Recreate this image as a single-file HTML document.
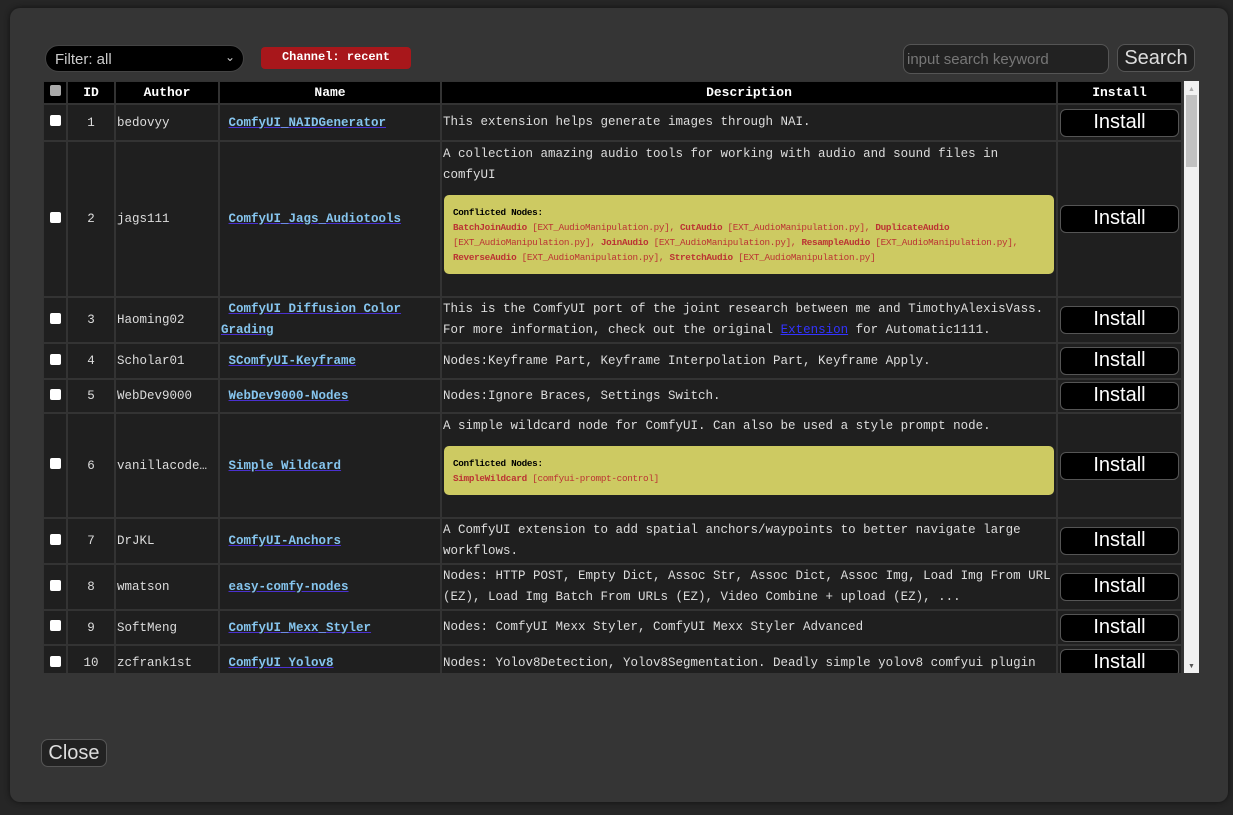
<!DOCTYPE html>
<html><head><meta charset="utf-8"><style>
html,body{margin:0;padding:0;width:1233px;height:815px;overflow:hidden;background:#262626;}
.dlg{position:absolute;left:10px;top:8px;width:1218px;height:794px;background:#353535;border-radius:10px;box-shadow:0 0 6px #111;}
.sel{position:absolute;left:45px;top:45px;width:199px;height:27px;background:#000;border:1px solid #444;border-radius:14px;box-sizing:border-box;color:#ccc;font:15px "Liberation Sans",sans-serif;padding:5px 0 0 9px;}
.sel span{position:absolute;right:8px;top:4px;font-size:12px;}
.ch{position:absolute;left:261px;top:47px;width:150px;height:22px;background:#a8171b;border-radius:4px;color:#fff;font:bold 12px "Liberation Mono",monospace;text-align:center;line-height:21px;}
.inp{position:absolute;left:903px;top:44px;width:206px;height:30px;background:#222;border:1px solid #555;border-radius:8px;box-sizing:border-box;color:#777;font:15px "Liberation Sans",sans-serif;padding:6px 3px;}
.sb{position:absolute;left:1117px;top:44px;width:78px;height:28px;background:#222;border:1px solid #555;border-radius:8px;box-sizing:border-box;color:#ddd;font:20px "Liberation Sans",sans-serif;text-align:center;line-height:26px;}
.wrap{position:absolute;left:43px;top:81px;width:1140px;height:592px;overflow:hidden;background:#333;}
table{border-collapse:separate;border-spacing:2px;margin:-1px 0 0 -1px;table-layout:fixed;font:12.5px "Liberation Mono",monospace;color:#ddd;}
td,th{background:#1f1f1f;padding:0 1px;overflow:hidden;white-space:nowrap;}
th{background:#000;color:#fff;font-weight:bold;height:21px;font-size:13px;}
td.c{text-align:center}
td.d{white-space:normal;line-height:21px;font-size:12.5px;}
a{color:#86c5ee;font-weight:bold;text-decoration:underline;text-decoration-color:#4a30d0;}
.cb{display:inline-block;width:11px;height:11px;background:#fff;border-radius:2px;}
.btn{display:block;margin:0 auto;width:119px;height:28px;background:#000;border:1px solid #555;border-radius:6px;box-sizing:border-box;color:#fff;font:20px "Liberation Sans",sans-serif;text-align:center;line-height:25px;}
.cf{background:#cdca62;border-radius:5px;margin:9px 1px 0 1px;padding:10px 9px 9px;font-size:9.3px;line-height:15px;color:#b33;letter-spacing:-0.3px}
.cf b.h{color:#000}
.scr{position:absolute;left:1184px;top:81px;width:15px;height:592px;background:#f1f1f1;}
.thumb{position:absolute;left:2px;top:14px;width:11px;height:72px;background:#c1c1c1;}
.close{position:absolute;left:41px;top:739px;width:66px;height:28px;background:#222;border:1px solid #555;border-radius:7px;box-sizing:border-box;color:#ddd;font:20px "Liberation Sans",sans-serif;text-align:center;line-height:26px;}
</style></head><body>
<div class="dlg"></div>
<div class="sel">Filter: all<span>&#8964;</span></div>
<div class="ch">Channel: recent</div>
<div class="inp">input search keyword</div>
<div class="sb">Search</div>
<div class="wrap"><table>
<colgroup><col style="width:22px"><col style="width:46px"><col style="width:102px"><col style="width:220px"><col style="width:614px"><col style="width:123px"></colgroup>
<tr><th><span class="cb" style="background:#aaa"></span></th><th>ID</th><th>Author</th><th>Name</th><th>Description</th><th>Install</th></tr>
<tr style="height:35px"><td class="c"><span class="cb"></span></td><td class="c">1</td><td>bedovyy</td><td>&nbsp;<a>ComfyUI_NAIDGenerator</a></td><td class="d">This extension helps generate images through NAI.</td><td><span class="btn">Install</span></td></tr>
<tr style="height:154px"><td class="c"><span class="cb"></span></td><td class="c">2</td><td>jags111</td><td>&nbsp;<a>ComfyUI_Jags_Audiotools</a></td><td class="d" style="vertical-align:top;padding-top:2px">A collection amazing audio tools for working with audio and sound files in comfyUI<div class="cf"><b class="h">Conflicted Nodes:</b><br><b>BatchJoinAudio</b> [EXT_AudioManipulation.py], <b>CutAudio</b> [EXT_AudioManipulation.py], <b>DuplicateAudio</b> [EXT_AudioManipulation.py], <b>JoinAudio</b> [EXT_AudioManipulation.py], <b>ResampleAudio</b> [EXT_AudioManipulation.py], <b>ReverseAudio</b> [EXT_AudioManipulation.py], <b>StretchAudio</b> [EXT_AudioManipulation.py]</div></td><td><span class="btn">Install</span></td></tr>
<tr style="height:44px"><td class="c"><span class="cb"></span></td><td class="c">3</td><td>Haoming02</td><td style="white-space:normal;line-height:21px">&nbsp;<a>ComfyUI Diffusion Color Grading</a></td><td class="d">This is the ComfyUI port of the joint research between me and TimothyAlexisVass. For more information, check out the original <span style="color:#33f;text-decoration:underline">Extension</span> for Automatic1111.</td><td><span class="btn">Install</span></td></tr>
<tr style="height:34px"><td class="c"><span class="cb"></span></td><td class="c">4</td><td>Scholar01</td><td>&nbsp;<a>SComfyUI-Keyframe</a></td><td class="d">Nodes:Keyframe Part, Keyframe Interpolation Part, Keyframe Apply.</td><td><span class="btn">Install</span></td></tr>
<tr style="height:32px"><td class="c"><span class="cb"></span></td><td class="c">5</td><td>WebDev9000</td><td>&nbsp;<a>WebDev9000-Nodes</a></td><td class="d">Nodes:Ignore Braces, Settings Switch.</td><td><span class="btn">Install</span></td></tr>
<tr style="height:103px"><td class="c"><span class="cb"></span></td><td class="c">6</td><td>vanillacode…</td><td>&nbsp;<a>Simple Wildcard</a></td><td class="d" style="vertical-align:top;padding-top:2px">A simple wildcard node for ComfyUI. Can also be used a style prompt node.<div class="cf"><b class="h">Conflicted Nodes:</b><br><b>SimpleWildcard</b> [comfyui-prompt-control]</div></td><td><span class="btn">Install</span></td></tr>
<tr style="height:44px"><td class="c"><span class="cb"></span></td><td class="c">7</td><td>DrJKL</td><td>&nbsp;<a>ComfyUI-Anchors</a></td><td class="d">A ComfyUI extension to add spatial anchors/waypoints to better navigate large workflows.</td><td><span class="btn">Install</span></td></tr>
<tr style="height:44px"><td class="c"><span class="cb"></span></td><td class="c">8</td><td>wmatson</td><td>&nbsp;<a>easy-comfy-nodes</a></td><td class="d">Nodes: HTTP POST, Empty Dict, Assoc Str, Assoc Dict, Assoc Img, Load Img From URL (EZ), Load Img Batch From URLs (EZ), Video Combine + upload (EZ), ...</td><td><span class="btn">Install</span></td></tr>
<tr style="height:33px"><td class="c"><span class="cb"></span></td><td class="c">9</td><td>SoftMeng</td><td>&nbsp;<a>ComfyUI_Mexx_Styler</a></td><td class="d">Nodes: ComfyUI Mexx Styler, ComfyUI Mexx Styler Advanced</td><td><span class="btn">Install</span></td></tr>
<tr style="height:34px"><td class="c"><span class="cb"></span></td><td class="c">10</td><td>zcfrank1st</td><td>&nbsp;<a>ComfyUI Yolov8</a></td><td class="d">Nodes: Yolov8Detection, Yolov8Segmentation. Deadly simple yolov8 comfyui plugin</td><td><span class="btn">Install</span></td></tr>
</table></div>
<div class="scr"><div class="thumb"></div><div style="position:absolute;left:4px;top:4px;font-size:7px;color:#aaa">&#9650;</div><div style="position:absolute;left:4px;bottom:3px;font-size:7px;color:#555">&#9660;</div></div>
<div class="close">Close</div>
</body></html>
